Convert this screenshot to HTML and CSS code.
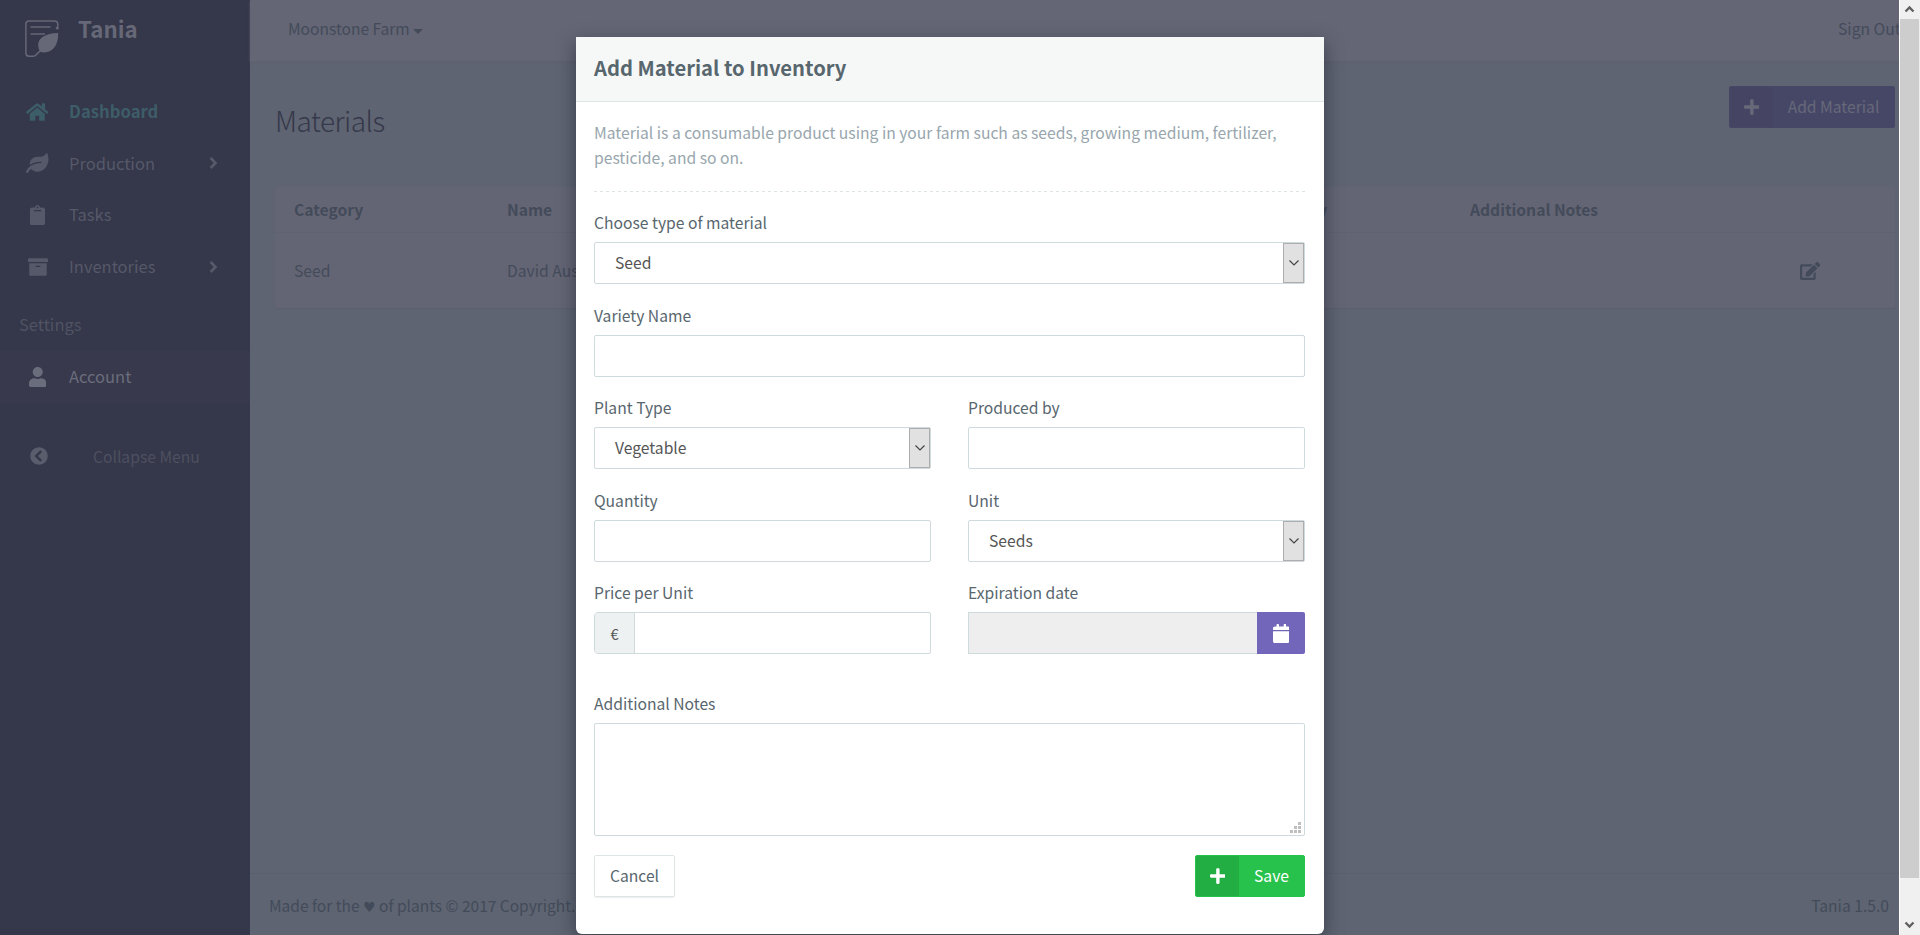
FILE: index.html
```html
<!DOCTYPE html>
<html lang="en">
<head>
<meta charset="utf-8">
<title>Tania</title>
<link rel="stylesheet" href="styles.css">
</head>
<body>
<div class="window">
  <div class="app">
    <aside class="sidebar">
      <div class="brand">
        <svg class="logo" viewBox="0 0 34 37"><g fill="none" stroke="currentColor" stroke-width="1.5"><path d="M32.8 7V4.5Q32.8 1 29.3 1H4Q.9 1 .9 4V33Q.9 36.2 4 36.2H8.5Q10 36.2 11 35L15 31"/><path d="M5.5 7H25.5M5.5 14H20"/></g><circle cx="32.3" cy="8" r="1.6" fill="currentColor"/><path fill="currentColor" d="M33.2 13C20 13.5 12.5 18 13.2 26Q13.5 29.5 15 31.7C24 34.500 33.500 29 33.200 13Z"/></svg>
        <span class="brand-name">Tania</span>
      </div>
      <nav class="nav">
        <a class="item current"><span class="ico"><svg class="fa" viewBox="0 0 576 512"><path d="M280.37 148.26L96 300.11V464a16 16 0 0 0 16 16l112.06-.29a16 16 0 0 0 15.92-16V368a16 16 0 0 1 16-16h64a16 16 0 0 1 16 16v95.64a16 16 0 0 0 16 16.05L464 480a16 16 0 0 0 16-16V300L295.67 148.26a12.19 12.19 0 0 0-15.3 0zM571.6 251.47L488 182.56V44.05a12 12 0 0 0-12-12h-56a12 12 0 0 0-12 12v72.61L318.47 43a48 48 0 0 0-61 0L4.34 251.47a12 12 0 0 0-1.6 16.9l25.5 31A12 12 0 0 0 45.15 301l235.22-193.74a12.19 12.19 0 0 1 15.3 0L530.9 301a12 12 0 0 0 16.9-1.6l25.5-31a12 12 0 0 0-1.7-16.93z"/></svg></span><span class="t-dash">Dashboard</span></a>
        <a class="item"><span class="ico"><svg class="fa" viewBox="0 0 576 512"><path d="M546.2 9.7c-5.6-12.5-21.6-13-28.3-1.2C486.9 62.4 431.4 96 368 96h-80C182 96 96 182 96 288c0 7 .8 13.7 1.5 20.5C161.3 262.8 253.4 224 384 224c8.8 0 16 7.2 16 16s-7.2 16-16 16C132.6 256 26 410.1 2.4 468c-6.6 16.3 1.2 34.9 17.5 41.6 16.4 6.8 35-1.1 41.8-17.3 1.5-3.6 20.9-47.9 71.9-90.6 32.4 43.9 94 85.800 174.900 77.200C465.500 467.500 576 326.700 576 154.300c0-50.200-10.800-102.200-29.800-144.600z"/></svg></span><span>Production</span><svg class="fa arrow" viewBox="0 0 256 512"><path d="M224.3 273l-136 136c-9.4 9.400-24.600 9.400-33.900 0l-22.600-22.600c-9.400-9.400-9.400-24.600 0-33.900l96.400-96.400-96.400-96.400c-9.400-9.400-9.400-24.600 0-33.900L54.300 103c9.400-9.400 24.600-9.400 33.900 0l136 136c9.500 9.400 9.500 24.600.1 34z"/></svg></a>
        <a class="item"><span class="ico"><svg class="fa" viewBox="0 0 384 512"><path d="M384 112v352c0 26.510-21.490 48-48 48H48c-26.510 0-48-21.490-48-48V112c0-26.510 21.490-48 48-48h80c0-35.290 28.710-64 64-64s64 28.710 64 64h80c26.510 0 48 21.490 48 48zM192 40c-13.255 0-24 10.745-24 24s10.745 24 24 24 24-10.745 24-24-10.745-24-24-24m96 114v-20a6 6 0 0 0-6-6H102a6 6 0 0 0-6 6v20a6 6 0 0 0 6 6h180a6 6 0 0 0 6-6z"/></svg></span><span>Tasks</span></a>
        <a class="item"><span class="ico"><svg class="fa" viewBox="0 0 512 512"><path d="M32 448c0 17.700 14.300 32 32 32h384c17.700 0 32-14.300 32-32V160H32v288zm160-212c0-6.600 5.400-12 12-12h104c6.600 0 12 5.400 12 12v8c0 6.600-5.400 12-12 12H204c-6.600 0-12-5.400-12-12v-8zM480 32H32C14.300 32 0 46.300 0 64v48c0 8.800 7.200 16 16 16h480c8.800 0 16-7.200 16-16V64c0-17.700-14.300-32-32-32z"/></svg></span><span>Inventories</span><svg class="fa arrow" viewBox="0 0 256 512"><path d="M224.3 273l-136 136c-9.4 9.400-24.600 9.400-33.900 0l-22.600-22.600c-9.400-9.400-9.400-24.600 0-33.900l96.400-96.400-96.400-96.400c-9.400-9.400-9.400-24.600 0-33.900L54.300 103c9.400-9.400 24.600-9.400 33.900 0l136 136c9.500 9.400 9.500 24.600.1 34z"/></svg></a>
        <div class="nav-title">Settings</div>
        <a class="item active"><span class="ico"><svg class="fa" viewBox="0 0 448 512"><path d="M224 256c70.700 0 128-57.300 128-128S294.700 0 224 0 96 57.300 96 128s57.300 128 128 128zm89.600 32h-16.700c-22.200 10.200-46.900 16-72.900 16s-50.600-5.800-72.900-16h-16.700C60.200 288 0 348.200 0 422.400V464c0 26.500 21.500 48 48 48h352c26.500 0 48-21.500 48-48v-41.600c0-74.200-60.200-134.400-134.400-134.400z"/></svg></span><span>Account</span></a>
      </nav>
      <div class="collapse"><span class="ico"><svg class="fa fa-sm" viewBox="0 0 512 512"><path d="M256 504C119 504 8 393 8 256S119 8 256 8s248 111 248 248-111 248-248 248zM142.100 273l135.500 135.500c9.400 9.400 24.600 9.400 33.900 0l17-17c9.400-9.400 9.400-24.600 0-33.900L226.900 256l101.600-101.600c9.400-9.400 9.400-24.600 0-33.900l-17-17c-9.400-9.400-24.600-9.400-33.900 0L142.100 239c-9.400 9.400-9.400 24.600 0 34z"/></svg></span><span>Collapse Menu</span></div>
    </aside>
    <main class="main">
      <header class="topbar">
        <div class="farm"><span>Moonstone Farm</span><i class="caret"></i></div>
        <div class="signout">Sign Out</div>
      </header>
      <section class="content">
        <div class="page-head">
          <h1 class="page-title">Materials</h1>
          <div class="btn add"><span class="btn-icon"><svg class="fa" viewBox="0 0 448 512"><path d="M416 208H272V64c0-17.670-14.330-32-32-32h-32c-17.670 0-32 14.330-32 32v144H32c-17.670 0-32 14.330-32 32v32c0 17.670 14.330 32 32 32h144v144c0 17.670 14.330 32 32 32h32c17.670 0 32-14.330 32-32V304h144c17.670 0 32-14.330 32-32v-32c0-17.670-14.330-32-32-32z"/></svg></span><span class="btn-label">Add Material</span></div>
        </div>
        <div class="card">
          <div class="row head"><span>Category</span><span>Name</span><span>Quantity</span><span>Additional Notes</span><span></span></div>
          <div class="row data"><span>Seed</span><span>David Austin</span><span></span><span></span><span><svg class="fa edit" viewBox="0 0 576 512"><path d="M402.600 83.200l90.200 90.200c3.800 3.800 3.800 10 0 13.800L274.400 405.600l-92.800 10.300c-12.400 1.400-22.900-9.100-21.500-21.500l10.300-92.800L388.800 83.200c3.800-3.800 10-3.800 13.800 0zm162-22.900l-48.800-48.800c-15.200-15.200-39.900-15.200-55.200 0l-35.400 35.400c-3.800 3.800-3.800 10 0 13.800l90.200 90.200c3.800 3.800 10 3.800 13.800 0l35.400-35.400c15.200-15.300 15.200-40 0-55.200zM384 346.200V448H64V128h229.800c3.200 0 6.200-1.300 8.500-3.500l40-40c7.600-7.600 2.200-20.500-8.500-20.500H48C21.500 64 0 85.500 0 112v352c0 26.500 21.500 48 48 48h352c26.500 0 48-21.500 48-48V306.200c0-10.700-12.900-16-20.500-8.500l-40 40c-2.200 2.300-3.500 5.300-3.500 8.500z"/></svg></span></div>
        </div>
      </section>
      <footer class="footer"><span class="credit">Made for the <b class="heart">♥</b> of plants © 2017 Copyright.</span><span>Tania 1.5.0</span></footer>
    </main>
  </div>
  <div class="scrollbar">
    <svg class="sb-arrow" viewBox="0 0 19 19"><path d="M5.500 11.500L9.500 7.500L13.500 11.500"/></svg>
    <div class="thumb"></div>
    <svg class="sb-arrow sb-down" viewBox="0 0 19 19"><path d="M5.500 7.500L9.500 11.500L13.500 7.500"/></svg>
  </div>
  <div class="overlay">
    <div class="modal">
      <div class="modal-head">Add Material to Inventory</div>
      <div class="modal-body">
        <p class="desc">Material is a consumable product using in your farm such as seeds, growing medium, fertilizer,<br>pesticide, and so on.</p>
        <div class="dash"></div>
        <div class="form">
          <div class="field wide"><label>Choose type of material</label><div class="input select"><span>Seed</span><i class="drop"><svg viewBox="0 0 10 6"><path d="M.5.5L5 5L9.500.5"/></svg></i></div></div>
          <div class="field wide"><label>Variety Name</label><div class="input"></div></div>
          <div class="field"><label>Plant Type</label><div class="input select"><span>Vegetable</span><i class="drop"><svg viewBox="0 0 10 6"><path d="M.5.5L5 5L9.500.5"/></svg></i></div></div>
          <div class="field"><label>Produced by</label><div class="input"></div></div>
          <div class="field"><label>Quantity</label><div class="input"></div></div>
          <div class="field"><label>Unit</label><div class="input select"><span>Seeds</span><i class="drop"><svg viewBox="0 0 10 6"><path d="M.5.5L5 5L9.500.5"/></svg></i></div></div>
          <div class="field"><label>Price per Unit</label><div class="input price"><span class="addon">€</span></div></div>
          <div class="field"><label>Expiration date</label><div class="date"><span class="date-box"></span><span class="date-btn"><svg class="fa" viewBox="0 0 448 512"><path d="M12 192h424c6.600 0 12 5.400 12 12v260c0 26.500-21.500 48-48 48H48c-26.500 0-48-21.500-48-48V204c0-6.600 5.400-12 12-12zm436-44v-36c0-26.500-21.500-48-48-48h-48V12c0-6.600-5.400-12-12-12h-40c-6.600 0-12 5.400-12 12v52H160V12c0-6.600-5.400-12-12-12h-40c-6.600 0-12 5.400-12 12v52H48C21.500 64 0 85.500 0 112v36c0 6.600 5.400 12 12 12h424c6.600 0 12-5.400 12-12z"/></svg></span></div></div>
        </div>
        <div class="field notes"><label>Additional Notes</label><div class="input area"><svg class="grip" viewBox="0 0 11 11"><path d="M8 0h3v3H8zM4 4h3v3H4zM8 4h3v3H8zM0 8h3v3H0zM4 8h3v3H4zM8 8h3v3H8z"/></svg></div></div>
        <div class="actions">
          <div class="btn cancel">Cancel</div>
          <div class="btn save"><span class="btn-icon"><svg class="fa" viewBox="0 0 448 512"><path d="M416 208H272V64c0-17.670-14.330-32-32-32h-32c-17.670 0-32 14.330-32 32v144H32c-17.670 0-32 14.330-32 32v32c0 17.670 14.330 32 32 32h144v144c0 17.670 14.330 32 32 32h32c17.670 0 32-14.330 32-32V304h144c17.670 0 32-14.330 32-32v-32c0-17.670-14.330-32-32-32z"/></svg></span><span class="btn-label">Save</span></div>
        </div>
      </div>
    </div>
  </div>
</div>
</body>
</html>
```

FILE: styles.css
```css
* { box-sizing: border-box; }
body {
  margin: 0;
  font-family: "Source Sans Pro", "Noto Sans CJK SC", "Noto Sans", sans-serif;
  font-size: 15.66px;
  line-height: 25px;
  color: #58666e;
}
.window { position: relative; display: flex; width: 1920px; height: 935px; overflow: hidden; }
.app { display: flex; width: 1899px; height: 935px; overflow: hidden; background: #5e6471; }
.fa { display: block; height: 20px; fill: currentColor; }
.fa-sm { height: 18px; }

.sidebar { width: 250px; flex: none; background: #35374a; color: #555969; }
.brand { display: flex; height: 86px; padding: 20px 0 0 25px; color: #666877; }
.logo { width: 34px; height: 37px; }
.brand-name { margin-left: 19px; font-size: 22.300px; font-weight: 700; line-height: 17px; }
.item { display: flex; align-items: center; height: 51.600px; font-size: 16.500px; }
.item.current { color: #3d5d69; font-size: 16.700px; font-weight: 700; }
.item.active { background: #38394c; color: #6a6d7b; }
.ico { display: flex; justify-content: center; width: 75px; margin-right: -6px; }
.arrow { height: 18px; margin-left: auto; margin-right: 32px; }
.nav-title { height: 58.600px; padding: 20px 0 0 19px; color: #505363; font-size: 16.500px; }
.collapse { display: flex; align-items: center; height: 83px; margin-top: 12px; color: #4d5060; }
.collapse .ico { width: 78px; margin-right: 15px; color: #595d6c; }

.main { display: flex; flex-direction: column; flex: 1; color: #434b5a; }
.topbar { display: flex; justify-content: space-between; height: 61px; padding: 16px 0 0 38px; background: #646675; box-shadow: 0 1px 2px #5f616f; white-space: nowrap; }
.farm { display: flex; align-items: flex-start; font-size: 15.550px; }
.caret { margin: 13px 0 0 3px; border: 5px solid transparent; border-top-color: #434b5a; border-bottom: 0; }
.signout { width: 61px; }
.content { flex: 1; padding: 25px 4px 0 25px; }
.page-head { display: flex; justify-content: space-between; height: 101px; }
.page-title { margin: 12px 0 0; font-size: 28px; font-weight: 300; line-height: 44px; letter-spacing: -.5px; color: #36384b; }
.card { height: 121px; background: #636574; border-radius: 2px; box-shadow: 0 1px 1px #5c5f6d; }
.row { display: grid; grid-template-columns: 213px 752px 211px 330px 1fr; align-items: center; padding-left: 19px; }
.head { height: 46px; border-bottom: 1px solid #5f6270; font-weight: 700; }
.data { height: 75px; }
.edit { height: 18px; }
.footer { display: flex; justify-content: space-between; height: 62px; padding: 19px 10px 0 19px; border-top: 1px solid #5b5f6d; }
.credit { font-size: 15.500px; }
.heart { font-family: "DejaVu Sans", sans-serif; font-size: 14px; font-weight: 400; line-height: 1; }

.btn { display: flex; align-items: stretch; height: 42px; border-radius: 2px; }
.btn-icon { display: flex; align-items: center; justify-content: center; width: 43px; }
.btn-icon .fa { height: 18px; }
.btn-label { flex: 1; line-height: 40px; text-align: center; }
.add { width: 166px; background: #464767; color: #676979; border: 1px solid #464767; }
.add .btn-icon { background: #454462; }
.add .btn-label { line-height: 39px; }

.scrollbar { display: flex; flex-direction: column; width: 21px; padding: 0 1px 0 1px; background: linear-gradient(90deg, #fff 1px, #f0f0f0 1px); }
.sb-arrow { width: 19px; height: 19px; fill: none; stroke: #606060; stroke-width: 2.300; }
.sb-down { margin-top: 37px; }
.thumb { height: 859px; background: #cdcdcd; }

.overlay { position: absolute; top: 0; left: 0; width: 1899px; height: 935px; padding-top: 37px; overflow: hidden; }
.modal { width: 748px; height: 897px; margin: 0 auto 0 576px; background: #fff; border-radius: 0 0 6px 6px; box-shadow: 0 6px 18px rgba(20, 22, 36, .5); }
.modal-head { height: 65px; padding: 0 18px; background: #f6f8f8; border-bottom: 1px solid #dee5e7; font-size: 20.200px; font-weight: 700; line-height: 62px; }
.modal-body { padding: 18px 19px 0 18px; }
.desc { margin: 0; color: #98a6ad; white-space: nowrap; }
.dash { height: 1px; margin: 21px 0 18px; background: repeating-linear-gradient(90deg, #dee5e7 0 3px, transparent 3px 6px); }
.form { display: grid; grid-template-columns: 337px 337px; column-gap: 37px; row-gap: 18.500px; }
.wide { grid-column: span 2; }
.field label { display: block; height: 25px; margin-bottom: 7px; }
.input { height: 42px; border: 1px solid #cfdadd; border-radius: 2px; background: #fff; color: #555; }
.select { display: flex; justify-content: space-between; padding-left: 20px; line-height: 39px; }
.drop { display: flex; align-items: center; justify-content: center; width: 21px; background: #e1e1e1; border: 1px solid #adadad; }
.drop svg { width: 10px; height: 6px; fill: none; stroke: #444; stroke-width: 1.200; }
.price { border-radius: 4px 2px 2px 4px; }
.addon { display: flex; align-items: center; justify-content: center; width: 40px; height: 40px; background: #edf1f2; border-right: 1px solid #cfdadd; border-radius: 3px 0 0 3px; font-size: 14.500px; }
.date { display: flex; height: 42px; }
.date-box { flex: 1; background: #eee; border: 1px solid #cfdadd; border-right: 0; }
.date-btn { display: flex; align-items: center; justify-content: center; width: 48px; background: #7266ba; border-radius: 0 2px 2px 0; color: #fff; }
.date-btn .fa { height: 19px; }
.notes { margin-top: 37px; }
.area { display: flex; align-items: flex-end; justify-content: flex-end; height: 113px; padding: 2px 3px; }
.grip { width: 11px; height: 11px; fill: #bfbfbf; }
.actions { display: flex; justify-content: space-between; margin-top: 19px; }
.cancel { justify-content: center; width: 81px; border: 1px solid #dee5e7; box-shadow: 0 1px 1px rgba(90, 90, 90, .1); line-height: 40px; }
.save { width: 110px; background: #27c24c; border: 1px solid #27c24c; color: #fff; }
.save .btn-icon { background: #23ae44; }
```
